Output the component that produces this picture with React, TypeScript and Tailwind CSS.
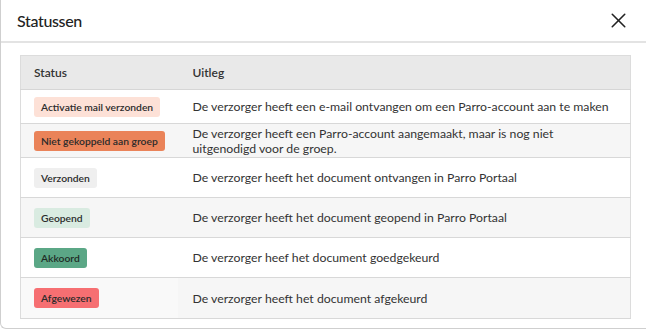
import { X } from "lucide-react";

const rows = [
  {
    label: "Activatie mail verzonden",
    badge: "bg-[#fde1d7] text-[#2b2b2b]",
    text: <>De verzorger heeft een e-mail ontvangen om een Parro-account aan te maken</>,
    h: "h-[34px]",
  },
  {
    label: "Niet gekoppeld aan groep",
    badge: "bg-[#ea8359] text-[#2b2b2b]",
    text: (
      <>
        De verzorger heeft een Parro-account aangemaakt, maar is nog niet
        <br />
        uitgenodigd voor de groep.
      </>
    ),
    h: "h-[34px]",
  },
  {
    label: "Verzonden",
    badge: "bg-[#efefef] text-[#2b2b2b]",
    text: <>De verzorger heeft het document ontvangen in Parro Portaal</>,
    h: "h-[40px]",
  },
  {
    label: "Geopend",
    badge: "bg-[#d9ebe1] text-[#2b2b2b]",
    text: <>De verzorger heeft het document geopend in Parro Portaal</>,
    h: "h-[40px]",
  },
  {
    label: "Akkoord",
    badge: "bg-[#5ba786] text-[#1f2b25]",
    text: <>De verzorger heef het document goedgekeurd</>,
    h: "h-[40px]",
  },
  {
    label: "Afgewezen",
    badge: "bg-[#f66f72] text-[#2b2b2b]",
    text: <>De verzorger heeft het document afgekeurd</>,
    h: "h-[41px]",
  },
];

export default function App() {
  return (
    <div className="w-[646px] h-[330px] overflow-hidden bg-white font-['Lato','Noto_Sans',sans-serif] text-[#333]">
      <div className="h-[329px] border-l border-b border-[#cfcfcf] rounded-bl-md">
        {/* Header */}
        <div className="h-[43px] flex items-center justify-between pl-[16px] pr-[15px] border-b-2 border-[#e3e3e3]">
          <h2 className="text-[16px] font-medium text-[#222] tracking-[-0.35px]">Statussen</h2>
          <X className="w-[25px] h-[25px] text-[#222]" strokeWidth={1.5} />
        </div>

        {/* Table */}
        <div className="pl-[19px] pr-[15px] pt-[12px]">
          <table className="w-full border border-[#dcdcdc] border-collapse text-[12.25px]">
            <thead>
              <tr className="h-[34px] bg-[#e9e9e9] border-b border-[#d6d6d6]">
                <th className="w-[157px] pl-[13px] text-left font-semibold text-[12px]">Status</th>
                <th className="pl-[15px] text-left font-semibold text-[12px]">Uitleg</th>
              </tr>
            </thead>
            <tbody>
              {rows.map((r, i) => (
                <tr
                  key={r.label}
                  className={`${r.h} border-b border-[#d8d8d8] ${i % 2 === 1 ? "bg-[#f6f6f6]" : "bg-white"}`}
                >
                  <td className={`pl-[13px] align-middle ${i === 5 ? "bg-[#f9f9f9]" : ""}`}>
                    <span className={`inline-block rounded-[3px] px-[7px] h-[20px] leading-[20px] text-[10.3px] font-semibold ${r.badge}`}>
                      {r.label}
                    </span>
                  </td>
                  <td className="pl-[15px] align-middle leading-[15px] text-[#333]">{r.text}</td>
                </tr>
              ))}
            </tbody>
          </table>
        </div>
      </div>
    </div>
  );
}
